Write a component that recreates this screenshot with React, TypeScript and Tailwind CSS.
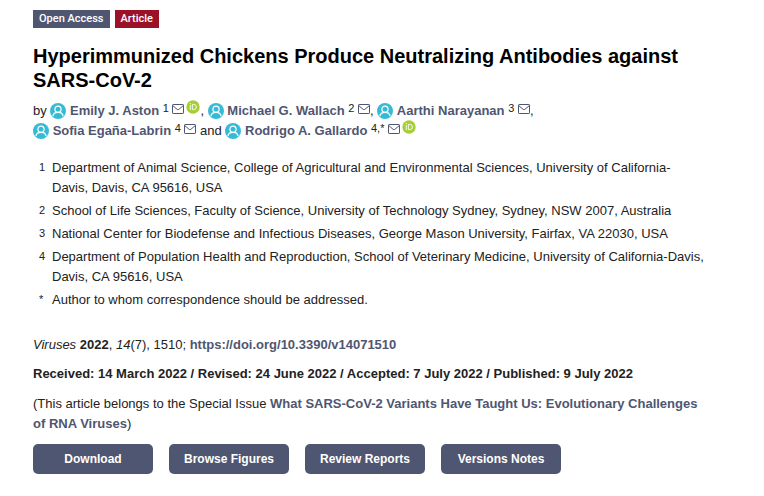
import { Fragment } from "react";

type Author = {
  name: string;
  marks: string;
  orcid?: boolean;
  after: string;
};

const authors: Author[] = [
  { name: "Emily J. Aston", marks: "1", orcid: true, after: ", " },
  { name: "Michael G. Wallach", marks: "2", after: ", " },
  { name: "Aarthi Narayanan", marks: "3", after: ", " },
  { name: "Sofia Egaña-Labrin", marks: "4", after: " and " },
  { name: "Rodrigo A. Gallardo", marks: "4,*", orcid: true, after: "" },
];

const affiliations = [
  {
    mark: "1",
    text: "Department of Animal Science, College of Agricultural and Environmental Sciences, University of California-Davis, Davis, CA 95616, USA",
  },
  {
    mark: "2",
    text: "School of Life Sciences, Faculty of Science, University of Technology Sydney, Sydney, NSW 2007, Australia",
  },
  {
    mark: "3",
    text: "National Center for Biodefense and Infectious Diseases, George Mason University, Fairfax, VA 22030, USA",
  },
  {
    mark: "4",
    text: "Department of Population Health and Reproduction, School of Veterinary Medicine, University of California-Davis, Davis, CA 95616, USA",
  },
  { mark: "*", text: "Author to whom correspondence should be addressed." },
];

const actions = ["Download", "Browse Figures", "Review Reports", "Versions Notes"];

function ProfileIcon() {
  return (
    <svg viewBox="0 0 16 16" className="-mt-1 inline-block size-4 align-[-4px]" aria-hidden="true">
      <circle cx="8" cy="8" r="8" fill="#35bcd4" />
      <g fill="none" stroke="#fff" strokeWidth="1.2">
        <circle cx="8" cy="6.2" r="3.1" />
        <path d="M2.9 13.2c.3-2.6 2.1-3.9 5.1-3.9s4.8 1.3 5.1 3.9" />
      </g>
    </svg>
  );
}

function MailIcon() {
  return (
    <svg viewBox="0 0 12 10" className="-mt-1 inline-block h-2.5 w-3 align-[1px]" aria-hidden="true">
      <g fill="none" stroke="#4f5671" strokeWidth="1">
        <rect x="0.5" y="0.5" width="11" height="9" rx="0.6" />
        <path d="M1 1.8l4.2 3.6q.8.6 1.6 0L11 1.8" />
      </g>
    </svg>
  );
}

function OrcidIcon() {
  return (
    <svg viewBox="0 0 14 14" className="-mt-1 inline-block size-3.5 align-[1px]" aria-hidden="true">
      <circle cx="7" cy="7" r="6.7" fill="#a6ce39" />
      <g fill="none" stroke="#fff" strokeWidth="0.9">
        <path d="M4.3 4.9v5.1" />
        <path d="M6.4 4.4h1.4a2.6 2.6 0 0 1 0 5.2H6.4z" />
      </g>
      <circle cx="4.3" cy="3.5" r="0.6" fill="#fff" />
    </svg>
  );
}

function AuthorEntry({ author }: { author: Author }) {
  return (
    <>
      <span className="whitespace-nowrap">
        <ProfileIcon />{" "}
        <a href="#" className="font-bold text-[#4f5671]">
          {author.name}
        </a>{" "}
        <span className="align-[3px] text-[11px] leading-none">{author.marks}</span>{" "}
        <a href="#" aria-label={`Email ${author.name}`}>
          <MailIcon />
        </a>
        {author.orcid && (
          <a href="#" aria-label={`ORCID record of ${author.name}`} className="ml-0.5">
            <OrcidIcon />
          </a>
        )}
      </span>
      {author.after}
    </>
  );
}

export default function App() {
  return (
    <main className="min-h-screen bg-white px-[33px] pt-2.5 pb-5 font-['Liberation_Sans',Arial,sans-serif] text-[13px] leading-5 text-[#222]">
      <div className="flex gap-[5px] font-[Roboto,sans-serif] text-[11px] leading-[18px] font-medium text-white">
        <span className="bg-[#4f5671] px-1.5">Open Access</span>
        <span className="bg-[#9b1128] px-1.5">Article</span>
      </div>

      <h1 className="mt-4 text-[20px] leading-6 font-bold text-black">
        Hyperimmunized Chickens Produce Neutralizing Antibodies against SARS-CoV-2
      </h1>

      <p className="mt-[9px] mr-32">
        by{" "}
        {authors.map((author) => (
          <Fragment key={author.name}>
            <AuthorEntry author={author} />
          </Fragment>
        ))}
      </p>

      <ul className="mt-[17px] mr-[25px] flex flex-col gap-[3px] pl-1.5">
        {affiliations.map(({ mark, text }) => (
          <li key={mark} className="flex">
            <span className="w-[13px] shrink-0 text-[11px] leading-[18px]">{mark}</span>
            <span>{text}</span>
          </li>
        ))}
      </ul>

      <p className="mt-[25px]">
        <em>Viruses</em> <b>2022</b>, <em>14</em>(7), 1510;{" "}
        <a href="https://doi.org/10.3390/v14071510" className="font-bold text-[#4f5671]">
          https://doi.org/10.3390/v14071510
        </a>
      </p>

      <p className="mt-[9px] font-bold">
        Received: 14 March 2022 / Revised: 24 June 2022 / Accepted: 7 July 2022 / Published: 9 July 2022
      </p>

      <p className="mt-2.5 mr-[25px]">
        (This article belongs to the Special Issue{" "}
        <a href="#" className="font-bold text-[#4f5671]">
          What SARS-CoV-2 Variants Have Taught Us: Evolutionary Challenges of RNA Viruses
        </a>
        )
      </p>

      <div className="mt-2.5 flex flex-wrap gap-4">
        {actions.map((label) => (
          <button
            key={label}
            type="button"
            className="w-[120px] rounded-[5px] bg-[#4f5671] text-[12px] leading-[30px] font-bold text-white"
          >
            {label}
          </button>
        ))}
      </div>
    </main>
  );
}
